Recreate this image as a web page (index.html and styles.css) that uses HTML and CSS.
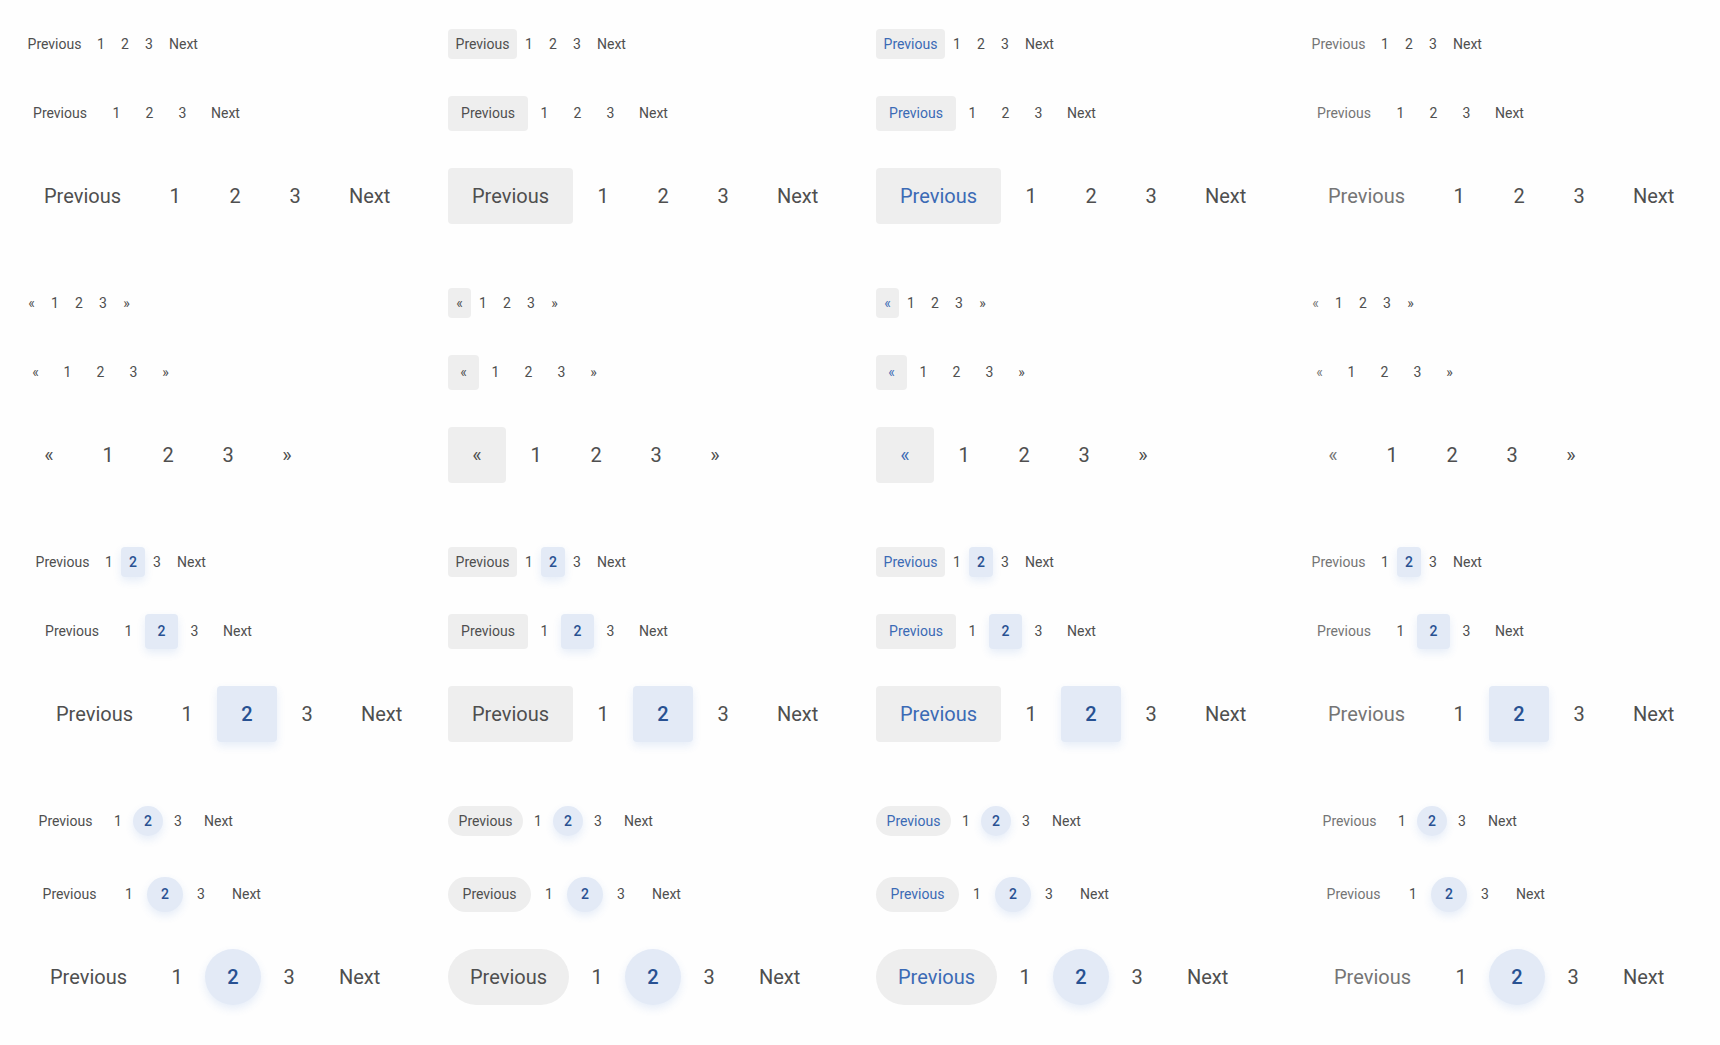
FILE: index.html
```
<!DOCTYPE html>
<html lang="en">
<head>
    <meta charset="UTF-8">
    <meta name="viewport" content="width=device-width, initial-scale=1.0">
    <title>Pagination</title>
    <link rel="stylesheet" href="styles.css">
</head>
<body>
    <main class="sheet"></main>
    <script src="script.js"></script>
</body>
</html>
```
FILE: styles.css
```
* {
    box-sizing: border-box;
}

body {
    font-family: Roboto, sans-serif;
    margin: 0;
    color: #4f4f4f;
    background-color: #fefefe;
}

.sheet {
    display: flex;
    flex-direction: column;
    gap: 64px;
    padding: 29px 20px 40px;
}

.group {
    display: grid;
    grid-template-columns: repeat(4, minmax(0, 1fr));
    column-gap: 32px;
}

.column {
    display: flex;
    flex-direction: column;
    gap: 37px;
}

.pagination {
    display: flex;
    margin: 0;
    padding: 0;
    list-style: none;
}

.inset {
    padding-left: 8px;
}

.inset-wide {
    padding-left: 12px;
}

.page-link {
    display: flex;
    align-items: center;
    justify-content: center;
    height: 100%;
    border-radius: 4px;
    color: #4f4f4f;
    text-decoration: none;
    white-space: nowrap;
}

/* sizes */
.sm {
    height: 30px;
    font-size: 14px;
}

.md {
    height: 35px;
    font-size: 14px;
    line-height: 17px;
}

.lg {
    height: 56px;
    font-size: 20px;
}

.sm .number { width: 24px; }
.md .number { width: 33px; }
.lg .number { width: 60px; }

.sm .word { width: 69px; }
.md .word { width: 80px; }
.lg .word { width: 125px; }

.sm .arrow { width: 23px; }
.md .arrow { width: 31px; }
.lg .arrow { width: 58px; }

.sm .next { padding: 0 8px; }
.md .next { padding: 0 12px; }
.lg .next { padding: 0 24px; }

/* circle version */
.circle .page-link {
    border-radius: 28px;
}

.circle .sm + .md {
    margin-top: 4px;
}

.circle .sm .number { width: 30px; }
.circle .md .number { width: 36px; }
.circle .lg .number { width: 56px; }

.circle .sm .word { width: 75px; }
.circle .md .word { width: 83px; }
.circle .lg .word { width: 121px; }

.circle .sm .next { padding: 0 11px; }
.circle .md .next { padding: 0 13px; }
.circle .lg .next { padding: 0 22px; }

/* states */
.hover .first {
    background-color: #eeeeee;
}

.focus .first {
    color: #3b6ab5;
    background-color: #eeeeee;
}

.disabled .first {
    color: #757575;
}

.active {
    color: #285192;
    font-weight: 500;
    background-color: #e3eaf6;
    box-shadow: 0 4px 8px rgba(59, 113, 202, 0.12);
}
```
FILE: script.js
```
const sheet = document.querySelector('.sheet');
const sizes = ['sm', 'md', 'lg'];
const states = ['default', 'hover', 'focus', 'disabled'];

const groups = [
    { name: 'basic', prev: 'Previous', next: 'Next' },
    { name: 'arrows', prev: '«', next: '»' },
    { name: 'square', prev: 'Previous', next: 'Next', active: 2 },
    { name: 'circle', prev: 'Previous', next: 'Next', active: 2 }
];

// left inset of a pagination inside its column
function inset(group, state, size) {
    if (group.name === 'square' && state === 'default') {
        return size === 'sm' ? 'inset' : 'inset-wide';
    }
    if (group.name === 'circle' && (state === 'default' || state === 'disabled')) {
        return 'inset';
    }
    return '';
}

function pagination(group, state, size) {
    const arrows = group.name === 'arrows';
    const numbers = [1, 2, 3].map(n => `
        <li><a href="#" class="page-link number ${n === group.active ? 'active' : ''}">${n}</a></li>`).join('');
    return `
        <ul class="pagination ${size} ${inset(group, state, size)}">
            <li><a href="#" class="page-link first ${arrows ? 'arrow' : 'word'}">${group.prev}</a></li>
            ${numbers}
            <li><a href="#" class="page-link ${arrows ? 'arrow' : 'next'}">${group.next}</a></li>
        </ul>`;
}

sheet.innerHTML = groups.map(group => `
    <section class="group ${group.name}">
        ${states.map(state => `
        <div class="column ${state}">
            ${sizes.map(size => pagination(group, state, size)).join('')}
        </div>`).join('')}
    </section>`).join('');
```
